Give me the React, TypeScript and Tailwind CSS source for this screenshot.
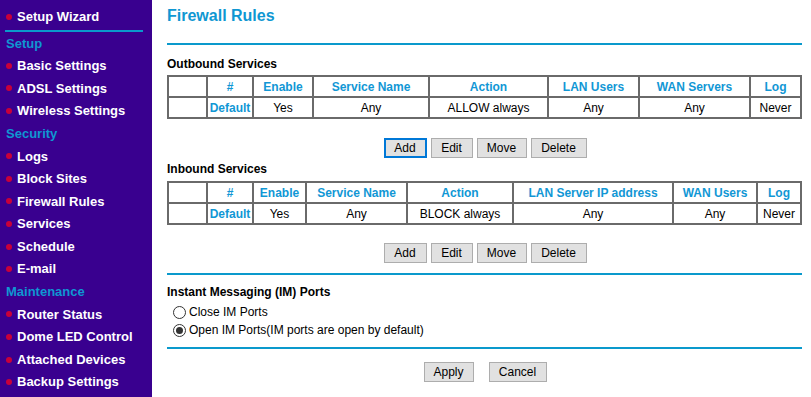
import React from 'react';

type MenuItem = { label: string; header?: boolean };

const menu: MenuItem[] = [
  { label: 'Setup', header: true },
  { label: 'Basic Settings' },
  { label: 'ADSL Settings' },
  { label: 'Wireless Settings' },
  { label: 'Security', header: true },
  { label: 'Logs' },
  { label: 'Block Sites' },
  { label: 'Firewall Rules' },
  { label: 'Services' },
  { label: 'Schedule' },
  { label: 'E-mail' },
  { label: 'Maintenance', header: true },
  { label: 'Router Status' },
  { label: 'Dome LED Control' },
  { label: 'Attached Devices' },
  { label: 'Backup Settings' },
];

const outboundCols = ['', '#', 'Enable', 'Service Name', 'Action', 'LAN Users', 'WAN Servers', 'Log'];
const outboundRow = ['', 'Default', 'Yes', 'Any', 'ALLOW always', 'Any', 'Any', 'Never'];

const inboundCols = ['', '#', 'Enable', 'Service Name', 'Action', 'LAN Server IP address', 'WAN Users', 'Log'];
const inboundRow = ['', 'Default', 'Yes', 'Any', 'BLOCK always', 'Any', 'Any', 'Never'];

const Bullet = () => <span className="w-[6px] h-[6px] rounded-full bg-[#c8003a] mr-[5px] shrink-0" />;

const Sidebar = () => (
  <div className="w-[152px] shrink-0 h-full bg-[#39008f] pt-[5px]">
    <div className="h-[23px] flex items-center pl-[6px] text-white font-bold text-[13px]">
      <Bullet />
      Setup Wizard
    </div>
    <div className="ml-[5px] mt-[2px] w-[138px] h-[2px] bg-[#0a99cc]" />
    {menu.map((m) =>
      m.header ? (
        <div key={m.label} className="h-[22.6px] flex items-center pl-[6px] text-[#0f97d2] font-bold text-[13px]">
          {m.label}
        </div>
      ) : (
        <div key={m.label} className="h-[22.6px] flex items-center pl-[6px] text-white font-bold text-[13px]">
          <Bullet />
          {m.label}
        </div>
      )
    )}
  </div>
);

const RuleTable = ({ cols, row, grid }: { cols: string[]; row: string[]; grid: string }) => (
  <div className={`grid ${grid} gap-[2px] p-[2px] bg-[#6a6a6a] w-[635px]`}>
    {cols.map((c, i) => (
      <div key={'h' + i} className="h-[19px] bg-white flex items-center justify-center text-[12px] font-bold text-[#1197d5] whitespace-nowrap">
        {c}
      </div>
    ))}
    {row.map((c, i) => (
      <div
        key={'d' + i}
        className={
          i === 1
            ? 'h-[19px] bg-white flex items-center justify-center text-[12px] font-bold text-[#1197d5] whitespace-nowrap'
            : 'h-[19px] bg-white flex items-center justify-center text-[12px] text-black whitespace-nowrap'
        }
      >
        {c}
      </div>
    ))}
  </div>
);

const Btn = ({ label, w, focused }: { label: string; w: string; focused?: boolean }) => (
  <button
    className={
      focused
        ? `${w} h-[20px] bg-[#e1e1e1] border-2 border-[#0078d7] text-[12px] text-black flex items-center justify-center`
        : `${w} h-[20px] bg-[#e1e1e1] border border-[#adadad] text-[12px] text-black flex items-center justify-center`
    }
  >
    {label}
  </button>
);

const ButtonRow = ({ focused }: { focused?: boolean }) => (
  <div className="flex justify-center gap-[4px] pl-[1px]">
    <Btn label="Add" w="w-[43px]" focused={focused} />
    <Btn label="Edit" w="w-[42px]" />
    <Btn label="Move" w="w-[50px]" />
    <Btn label="Delete" w="w-[56px]" />
  </div>
);

const Radio = ({ checked, label }: { checked?: boolean; label: string }) => (
  <div className="h-[18px] flex items-center pl-[6px] text-[12px] text-black">
    <span className="w-[13px] h-[13px] rounded-full border border-[#333] bg-white flex items-center justify-center mr-[3px]">
      {checked && <span className="w-[7px] h-[7px] rounded-full bg-[#333]" />}
    </span>
    {label}
  </div>
);

export default function App() {
  return (
    <div className="flex w-[811px] h-[397px] overflow-hidden bg-white font-['Liberation_Sans',Arial,sans-serif]">
      <Sidebar />
      <div className="flex-1 pl-[15px] pr-[9px]">
        <div className="pt-[6px] text-[16px] leading-[20px] font-bold text-[#0f97d2]">Firewall Rules</div>
        <div className="mt-[17px] h-[2px] bg-[#0a99cc]" />

        <div className="mt-[12px] text-[12px] leading-[14px] font-bold text-black">Outbound Services</div>
        <div className="mt-[4px]">
          <RuleTable cols={outboundCols} row={outboundRow} grid="grid-cols-[37px_44px_58px_114px_117px_89px_109px_49px]" />
        </div>
        <div className="mt-[19px]">
          <ButtonRow focused />
        </div>

        <div className="mt-[4px] text-[12px] leading-[14px] font-bold text-black">Inbound Services</div>
        <div className="mt-[5px]">
          <RuleTable cols={inboundCols} row={inboundRow} grid="grid-cols-[37px_44px_51px_99px_104px_158px_82px_42px]" />
        </div>
        <div className="mt-[18px]">
          <ButtonRow />
        </div>

        <div className="mt-[10px] h-[2px] bg-[#0a99cc]" />
        <div className="mt-[10px] text-[12px] leading-[14px] font-bold text-black">Instant Messaging (IM) Ports</div>
        <div className="mt-[4px]">
          <Radio label="Close IM Ports" />
          <Radio checked label="Open IM Ports(IM ports are open by default)" />
        </div>
        <div className="mt-[8px] h-[2px] bg-[#0a99cc]" />

        <div className="mt-[13px] flex justify-center gap-[15px] pl-[1px]">
          <Btn label="Apply" w="w-[50px]" />
          <Btn label="Cancel" w="w-[58px]" />
        </div>
      </div>
    </div>
  );
}
